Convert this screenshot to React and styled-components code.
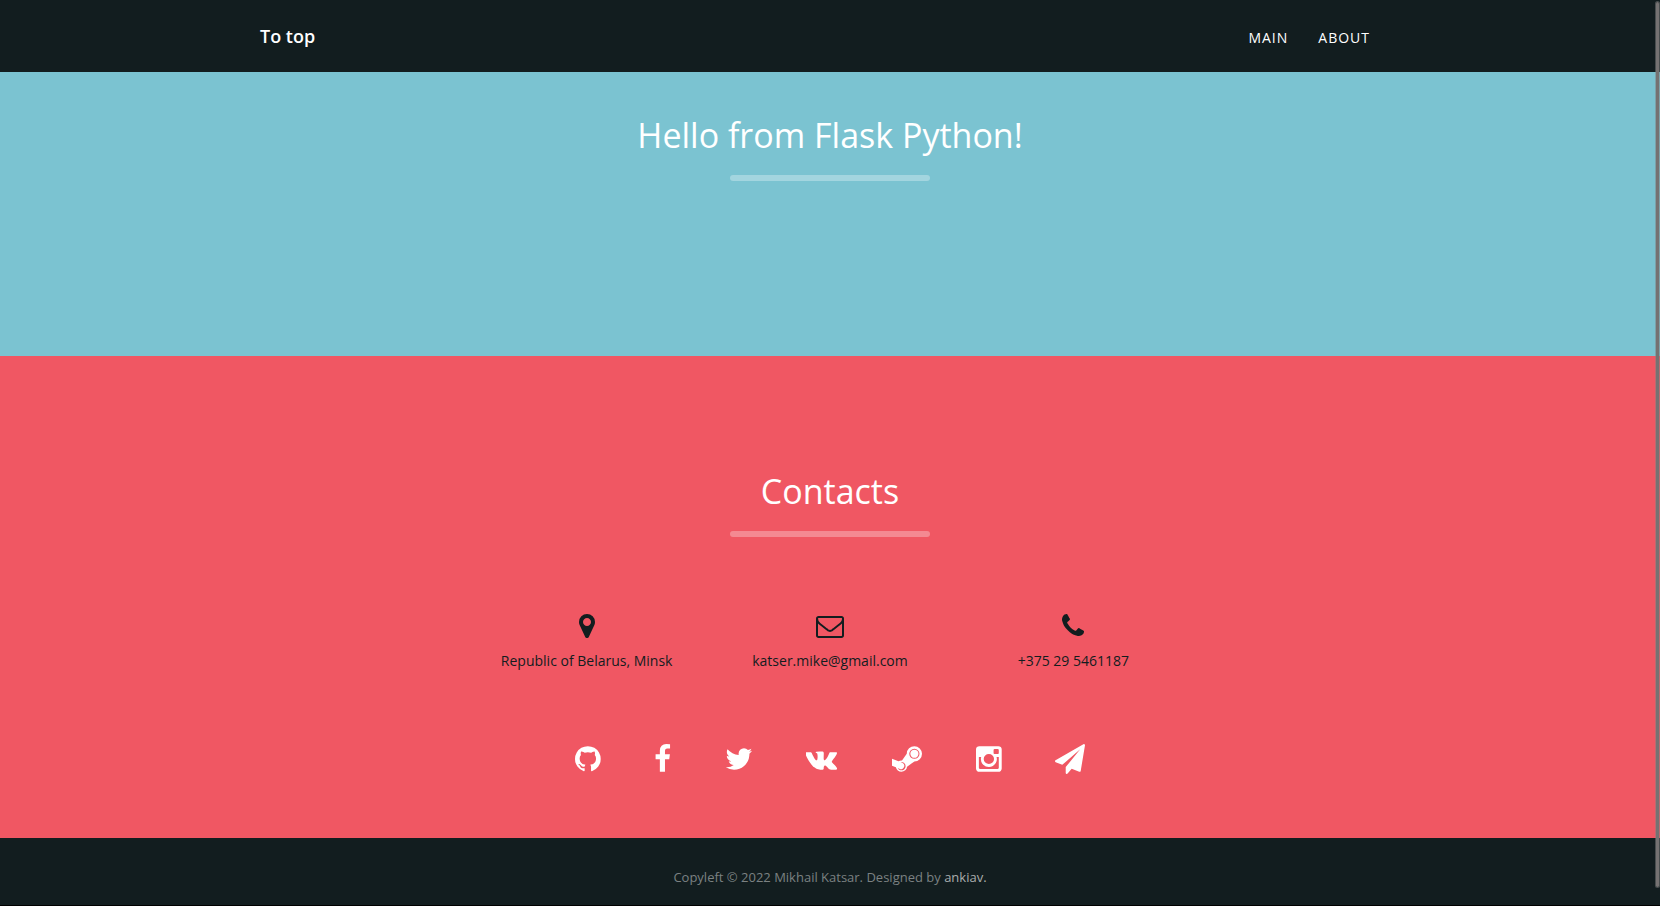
import React from "react";
import styled, { createGlobalStyle } from "styled-components";

const GlobalStyle = createGlobalStyle`
  *, *::before, *::after { box-sizing: border-box; }
  body {
    margin: 0;
    background: #000;
    color: #121d1f;
    font-family: "Open Sans", sans-serif;
    font-size: 14px;
    line-height: 20px;
  }
  a { color: inherit; text-decoration: none; }
`;

const Header = styled.header`
  background: #121d1f;
  color: #fff;
`;

const HeaderInner = styled.div`
  display: flex;
  align-items: baseline;
  justify-content: space-between;
  max-width: 1170px;
  height: 72px;
  margin: 0 auto;
  padding: 0 30px 0 15px;
  line-height: 72px;
`;

const Brand = styled.a`
  font-size: 18px;
  font-weight: 600;
`;

const Nav = styled.nav`
  display: flex;
`;

const NavLink = styled.a`
  padding: 0 15px;
  letter-spacing: 1px;
  text-transform: uppercase;
`;

const Section = styled.section`
  padding: ${(p) => p.$padding};
  background: ${(p) => p.$color};
  text-align: center;
`;

const Title = styled.h2`
  margin: 0;
  color: #fff;
  font-size: 34px;
  font-weight: 400;
  line-height: 50px;

  &::after {
    content: "";
    display: block;
    width: 200px;
    height: 6px;
    margin: 15px auto 0;
    border-radius: 3px;
    background: rgba(255, 255, 255, 0.3);
  }
`;

const ContactGrid = styled.div`
  display: grid;
  grid-template-columns: repeat(3, 1fr);
  max-width: 730px;
  margin: 75px auto 0;
`;

const Contact = styled.div`
  display: flex;
  flex-direction: column;
  align-items: center;
  gap: 11px;
`;

const Glyph = styled.svg`
  display: block;
  width: auto;
  height: ${(p) => p.$size}px;
  fill: currentColor;
`;

const SocialRow = styled.div`
  margin-top: 73px;
  color: #fff;
`;

const SocialLink = styled.a`
  display: inline-block;
  margin: 0 25px;
  vertical-align: top;
`;

const Footer = styled.footer`
  padding: 29px 15px 18px;
  background: #121d1f;
  color: #7b8182;
  font-size: 13px;
  text-align: center;
`;

const FooterLink = styled.a`
  color: #a9adad;
`;

const ScrollThumb = styled.div`
  position: fixed;
  top: 1px;
  right: 0;
  bottom: 18px;
  width: 5px;
  border: 1px solid rgba(127, 127, 127, 0.5);
  border-radius: 5px;
  background: #757272;
  background-clip: padding-box;
`;

const contacts = [
  {
    text: "Republic of Belarus, Minsk",
    box: "384 0 1024 1792",
    path: "M1152 640q0-106-75-181t-181-75-181 75-75 181 75 181 181 75 181-75 75-181zm256 0q0 109-33 179l-364 774q-16 33-47.5 52t-67.5 19-67.5-19-46.5-52l-365-774q-33-70-33-179 0-212 150-362t362-150 362 150 150 362z",
  },
  {
    text: "katser.mike@gmail.com",
    box: "0 0 1792 1792",
    path: "M1664 1504v-768q-32 36-69 66-268 206-426 338-51 43-83 67t-86.5 48.5-102.5 24.5h-2q-48 0-102.5-24.5t-86.5-48.5-83-67q-158-132-426-338-37-30-69-66v768q0 13 9.5 22.5t22.5 9.5h1472q13 0 22.5-9.5t9.5-22.5zm0-1051v-24.5l-.5-13-3-12.5-5.5-9-9-7.5-14-2.5h-1472q-13 0-22.5 9.5t-9.5 22.5q0 168 147 284 193 152 401 317 6 5 35 29.5t46 37.5 44.5 31.5 50.5 27.5 43 9h2q20 0 43-9t50.5-27.5 44.5-31.5 46-37.5 35-29.5q208-165 401-317 54-43 100.5-115.5t46.5-131.5zm128-37v1088q0 66-47 113t-113 47h-1472q-66 0-113-47t-47-113v-1088q0-66 47-113t113-47h1472q66 0 113 47t47 113z",
  },
  {
    text: "+375 29 5461187",
    box: "192 0 1408 1792",
    path: "M1600 1240q0 27-10 70.5t-21 68.5q-21 50-122 106-94 51-186 51-27 0-53-3.5t-57.5-12.5-47-14.5-55.5-20.5-49-18q-98-35-175-83-127-79-264-216t-216-264q-48-77-83-175-3-9-18-49t-20.5-55.5-14.5-47-12.5-57.5-3.5-53q0-92 51-186 56-101 106-122 25-11 68.5-21t70.5-10q14 0 21 3 18 6 53 76 11 19 30 54t35 63.5 31 53.5q3 4 17.5 25t21.5 35.5 7 28.5q0 20-28.5 50t-62 55-62 53-28.5 46q0 9 5 22.5t8.5 20.5 14 24 11.5 19q76 137 174 235t235 174q2 1 19 11.5t24 14 20.5 8.5 22.5 5q18 0 46-28.5t53-62 55-62 50-28.5q14 0 28.5 7t35.5 21.5 25 17.5q25 15 53.5 31t63.5 35 54 30q70 35 76 53 3 7 3 21z",
  },
];

const socials = [
  {
    name: "GitHub",
    box: "128 0 1536 1792",
    path: "M896 128q209 0 385.5 103t279.5 279.5 103 385.5q0 251-146.5 451.5t-378.5 277.5q-27 5-40-7t-13-30q0-3 .5-76.5t.5-134.5q0-97-52-142 57-6 102.5-18t94-39 81-66.5 53-105 20.5-150.5q0-119-79-206 37-91-8-204-28-9-81 11t-92 44l-38 24q-93-26-192-26t-192 26q-16-11-42.5-27t-83.5-38.5-85-13.5q-45 113-8 204-79 87-79 206 0 85 20.5 150t52.5 105 80.5 67 94 39 102.5 18q-39 36-49 103-21 10-45 15t-57 5-65.5-21.5-55.5-62.5q-19-32-48.5-52t-49.5-24l-20-3q-21 0-29 4.5t-5 11.5 9 14 13 12l7 5q22 10 43.5 38t31.5 51l10 23q13 38 44 61.5t67 30 69.5 7 55.5-3.5l23-4q0 38 .5 88.5t.5 54.5q0 18-13 30t-40 7q-232-77-378.5-277.5t-146.5-451.5q0-209 103-385.5t279.5-279.5 385.5-103z",
  },
  {
    name: "Facebook",
    box: "384 0 1024 1792",
    path: "M1343 12v264h-157q-86 0-116 36t-30 108v189h293l-39 296h-254v759h-306v-759h-255v-296h255v-218q0-186 104-288.5t277-102.5q147 0 228 12z",
  },
  {
    name: "Twitter",
    box: "64 0 1664 1792",
    path: "M1684 408q-67 98-162 167 1 14 1 42 0 130-38 259.5t-115.5 248.5-184.5 210.5-258 146-323 54.5q-271 0-496-145 35 4 78 4 225 0 401-138-105-2-188-64.5t-114-159.5q33 5 61 5 43 0 85-11-112-23-185.5-111.5t-73.5-205.5v-4q68 38 146 41-66-44-105-115t-39-154q0-88 44-163 121 149 294.5 238.5t371.5 99.5q-8-38-8-74 0-134 94.5-228.5t228.5-94.5q140 0 236 102 109-21 205-78-37 115-142 178 93-10 186-50z",
  },
  {
    name: "VK",
    box: "0 0 1920 1792",
    path: "M1853 520q23 64-150 294-24 32-65 85-78 100-90 131-17 41 14 81 17 21 81 82h1l1 1 1 1 2 2q141 131 191 221 3 5 6.5 12.5t7 26.5-.5 34-25 27.5-59 12.5l-256 4q-24 5-56-5t-52-22l-20-12q-30-21-70-64t-68.5-77.5-61-58-56.5-15.5q-3 1-8 3.5t-17 14.5-21.5 29.5-17 52-6.5 77.5q0 15-3.5 27.5t-7.5 18.5l-4 5q-18 19-53 22h-115q-71 4-146-16.5t-131.5-53-103-66-70.5-57.5l-25-24q-10-10-27.5-30t-71.5-91-106-151-122.5-211-130.5-272q-6-16-6-27t3-16l4-6q15-19 57-19l274-2q12 2 23 6.5t16 8.5l5 3q16 11 24 32 20 50 46 103.5t41 81.5l16 29q29 60 56 104t48.5 68.5 41.5 38.5 34 14 27-5q2-1 5-5t12-22 13.5-47 9.5-81 0-125q-2-40-9-73t-14-46l-6-12q-25-34-85-43-13-2 5-24 17-19 38-30 53-26 239-24 82 1 135 13 20 5 33.5 13.5t20.5 24 10.5 32 3.5 45.5-1 55-2.5 70.5-1.5 82.5q0 11-1 42t-.5 48 3.5 40.5 11.5 39 22.5 24.5q8 2 17 4t26-11 38-34.5 52-67 68-107.5q60-104 107-225 4-10 10-17.5t11-10.5l4-3 5-2.5 13-3 20-.5 288-2q39-5 64 2.5t31 16.5z",
  },
  {
    name: "Steam",
    box: "0 0 1792 1792",
    path: "M1582 582q0 101-71.5 172.5t-172.5 71.5-172.5-71.5-71.5-172.5 71.5-172.5 172.5-71.5 172.5 71.5 71.5 172.5zm-770 742q0-104-73-177t-177-73q-27 0-54 6l104 42q77 31 109.5 106.5t1.5 151.5q-31 77-107 109t-152 1q-21-8-62-24.5t-61-24.5q32 60 91 96.5t130 36.5q104 0 177-73t73-177zm830-741q0-126-89.5-215.5t-215.5-89.5q-127 0-216.5 89.5t-89.5 215.5q0 127 89.5 216t216.5 89q126 0 215.5-89t89.5-216zm150 0q0 189-133.5 322t-321.5 133l-437 319q-12 129-109 218t-229 89q-121 0-214-76t-118-192l-230-92v-429l389 157q79-48 173-48 13 0 35 2l284-407q2-187 135.5-319t320.5-132q188 0 321.5 133.5t133.5 321.5z",
  },
  {
    name: "Instagram",
    box: "128 0 1536 1792",
    path: "M1490 1426v-648h-135q20 63 20 131 0 126-64 232.5t-174 168.5-240 62q-197 0-337-135.5t-140-327.5q0-68 20-131h-141v648q0 26 17.5 43.5t43.5 17.5h1069q25 0 43-17.5t18-43.5zm-284-533q0-124-90.5-211.5t-218.5-87.5q-127 0-217.5 87.5t-90.5 211.5 90.5 211.5 217.5 87.5q128 0 218.5-87.5t90.5-211.5zm284-360v-165q0-28-20-48.5t-49-20.5h-174q-29 0-49 20.5t-20 48.5v165q0 29 20 49t49 20h174q29 0 49-20t20-49zm174-208v1142q0 81-58 139t-139 58h-1142q-81 0-139-58t-58-139v-1142q0-81 58-139t139-58h1142q81 0 139 58t58 139z",
  },
  {
    name: "Telegram",
    box: "0 0 1792 1792",
    path: "M1764 11q33 24 27 64l-256 1536q-5 29-32 45-14 8-31 8-11 0-24-5l-453-185-242 295q-18 23-49 23-13 0-22-4-19-7-30.5-23.5t-11.5-36.5v-349l864-1059-1069 925-395-162q-37-14-40-55-2-40 32-59l1664-960q15-9 32-9 20 0 36 11z",
  },
];

function Icon({ box, path, size }) {
  return (
    <Glyph viewBox={box} $size={size} aria-hidden="true">
      <path d={path} />
    </Glyph>
  );
}

export default function App() {
  return (
    <>
      <GlobalStyle />
      <Header id="top">
        <HeaderInner>
          <Brand href="#top">To top</Brand>
          <Nav>
            <NavLink href="#main">Main</NavLink>
            <NavLink href="#about">About</NavLink>
          </Nav>
        </HeaderInner>
      </Header>
      <main>
        <Section id="main" $color="#7bc3d1" $padding="38px 15px 175px">
          <Title as="h1">Hello from Flask Python!</Title>
        </Section>
        <Section id="about" $color="#f05763" $padding="110px 15px 64px">
          <Title>Contacts</Title>
          <ContactGrid>
            {contacts.map((c) => (
              <Contact key={c.text}>
                <Icon box={c.box} path={c.path} size={28} />
                <span>{c.text}</span>
              </Contact>
            ))}
          </ContactGrid>
          <SocialRow>
            {socials.map((s) => (
              <React.Fragment key={s.name}>
                <SocialLink href="#about" aria-label={s.name}>
                  <Icon box={s.box} path={s.path} size={30} />
                </SocialLink>{" "}
              </React.Fragment>
            ))}
          </SocialRow>
        </Section>
      </main>
      <Footer>
        Copyleft © 2022 Mikhail Katsar. Designed by <FooterLink href="#top">ankiav.</FooterLink>
      </Footer>
      <ScrollThumb />
    </>
  );
}
